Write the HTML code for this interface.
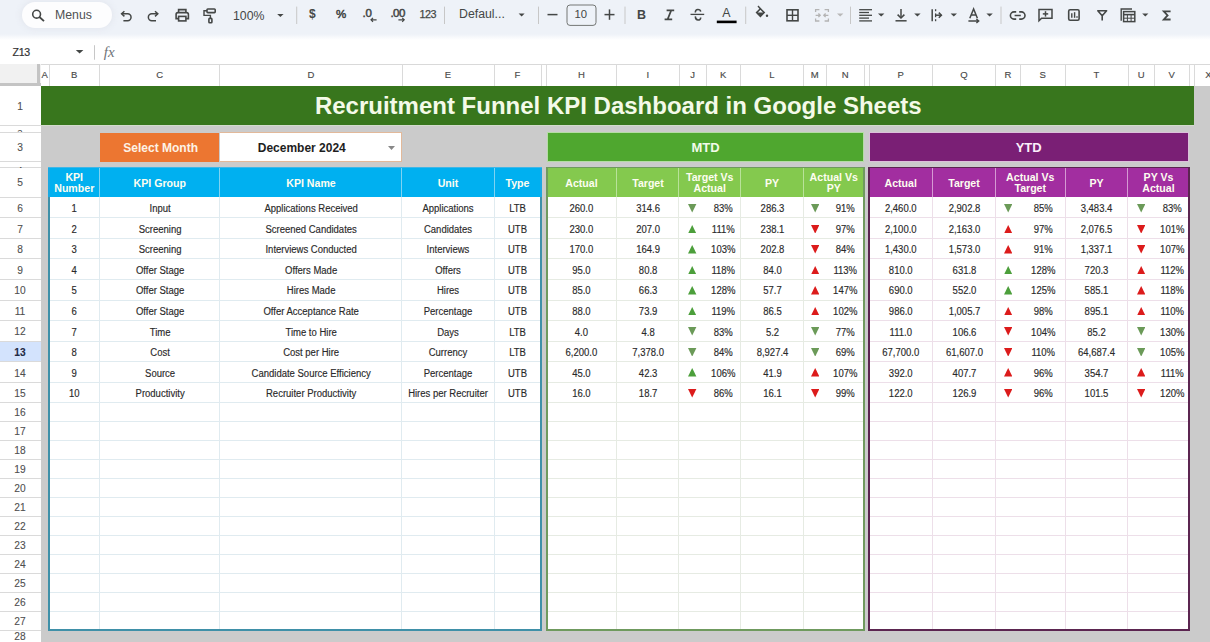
<!DOCTYPE html><html><head><meta charset="utf-8"><style>
html,body{margin:0;padding:0;width:1210px;height:642px;overflow:hidden;background:#fff;font-family:"Liberation Sans",sans-serif;}
div,svg{position:absolute;box-sizing:border-box;}
.t{height:20px;line-height:20px;white-space:nowrap;}
.d{-webkit-text-stroke:0.15px #2a2a2a;font-size:10px !important;transform:scaleX(0.95);}
</style></head><body>
<div style="left:0.00px;top:0.00px;width:1210.00px;height:38.50px;background:#eef2f8;"></div>
<div style="left:0.00px;top:38.50px;width:1210.00px;height:25.50px;background:#ffffff;"></div>
<div style="left:0.00px;top:34.00px;width:1210.00px;height:6.00px;background:linear-gradient(#eef2f8,#ffffff);"></div>
<div style="left:40.50px;top:64.00px;width:1169.50px;height:578.00px;background:#cbcbcb;"></div>
<div style="left:0.00px;top:64.00px;width:1210.00px;height:22.30px;background:#ffffff;"></div>
<div style="left:0.00px;top:63.60px;width:1210.00px;height:1.00px;background:#d9d9d9;"></div>
<div style="left:0.00px;top:86.30px;width:40.50px;height:555.70px;background:#ffffff;"></div>
<div class="t " style="left:40.50px;width:8.50px;top:65.01px;font-size:9.5px;font-weight:normal;color:#4a4a4a;text-align:center;-webkit-text-stroke:0.15px;">A</div>
<div style="left:48.50px;top:64.00px;width:1.00px;height:22.30px;background:#dadada;"></div>
<div class="t " style="left:49.00px;width:50.50px;top:65.01px;font-size:9.5px;font-weight:normal;color:#4a4a4a;text-align:center;-webkit-text-stroke:0.15px;">B</div>
<div style="left:99.00px;top:64.00px;width:1.00px;height:22.30px;background:#dadada;"></div>
<div class="t " style="left:99.50px;width:120.20px;top:65.01px;font-size:9.5px;font-weight:normal;color:#4a4a4a;text-align:center;-webkit-text-stroke:0.15px;">C</div>
<div style="left:219.20px;top:64.00px;width:1.00px;height:22.30px;background:#dadada;"></div>
<div class="t " style="left:219.70px;width:182.30px;top:65.01px;font-size:9.5px;font-weight:normal;color:#4a4a4a;text-align:center;-webkit-text-stroke:0.15px;">D</div>
<div style="left:401.50px;top:64.00px;width:1.00px;height:22.30px;background:#dadada;"></div>
<div class="t " style="left:402.00px;width:92.00px;top:65.01px;font-size:9.5px;font-weight:normal;color:#4a4a4a;text-align:center;-webkit-text-stroke:0.15px;">E</div>
<div style="left:493.50px;top:64.00px;width:1.00px;height:22.30px;background:#dadada;"></div>
<div class="t " style="left:494.00px;width:47.00px;top:65.01px;font-size:9.5px;font-weight:normal;color:#4a4a4a;text-align:center;-webkit-text-stroke:0.15px;">F</div>
<div style="left:540.50px;top:64.00px;width:1.00px;height:22.30px;background:#dadada;"></div>
<div style="left:545.50px;top:64.00px;width:1.00px;height:22.30px;background:#dadada;"></div>
<div class="t " style="left:546.00px;width:70.80px;top:65.01px;font-size:9.5px;font-weight:normal;color:#4a4a4a;text-align:center;-webkit-text-stroke:0.15px;">H</div>
<div style="left:616.30px;top:64.00px;width:1.00px;height:22.30px;background:#dadada;"></div>
<div class="t " style="left:616.80px;width:62.20px;top:65.01px;font-size:9.5px;font-weight:normal;color:#4a4a4a;text-align:center;-webkit-text-stroke:0.15px;">I</div>
<div style="left:678.50px;top:64.00px;width:1.00px;height:22.30px;background:#dadada;"></div>
<div class="t " style="left:679.00px;width:27.00px;top:65.01px;font-size:9.5px;font-weight:normal;color:#4a4a4a;text-align:center;-webkit-text-stroke:0.15px;">J</div>
<div style="left:705.50px;top:64.00px;width:1.00px;height:22.30px;background:#dadada;"></div>
<div class="t " style="left:706.00px;width:34.50px;top:65.01px;font-size:9.5px;font-weight:normal;color:#4a4a4a;text-align:center;-webkit-text-stroke:0.15px;">K</div>
<div style="left:740.00px;top:64.00px;width:1.00px;height:22.30px;background:#dadada;"></div>
<div class="t " style="left:740.50px;width:63.00px;top:65.01px;font-size:9.5px;font-weight:normal;color:#4a4a4a;text-align:center;-webkit-text-stroke:0.15px;">L</div>
<div style="left:803.00px;top:64.00px;width:1.00px;height:22.30px;background:#dadada;"></div>
<div class="t " style="left:803.50px;width:22.50px;top:65.01px;font-size:9.5px;font-weight:normal;color:#4a4a4a;text-align:center;-webkit-text-stroke:0.15px;">M</div>
<div style="left:825.50px;top:64.00px;width:1.00px;height:22.30px;background:#dadada;"></div>
<div class="t " style="left:826.00px;width:38.50px;top:65.01px;font-size:9.5px;font-weight:normal;color:#4a4a4a;text-align:center;-webkit-text-stroke:0.15px;">N</div>
<div style="left:864.00px;top:64.00px;width:1.00px;height:22.30px;background:#dadada;"></div>
<div style="left:868.50px;top:64.00px;width:1.00px;height:22.30px;background:#dadada;"></div>
<div class="t " style="left:869.00px;width:63.50px;top:65.01px;font-size:9.5px;font-weight:normal;color:#4a4a4a;text-align:center;-webkit-text-stroke:0.15px;">P</div>
<div style="left:932.00px;top:64.00px;width:1.00px;height:22.30px;background:#dadada;"></div>
<div class="t " style="left:932.50px;width:63.00px;top:65.01px;font-size:9.5px;font-weight:normal;color:#4a4a4a;text-align:center;-webkit-text-stroke:0.15px;">Q</div>
<div style="left:995.00px;top:64.00px;width:1.00px;height:22.30px;background:#dadada;"></div>
<div class="t " style="left:995.50px;width:25.00px;top:65.01px;font-size:9.5px;font-weight:normal;color:#4a4a4a;text-align:center;-webkit-text-stroke:0.15px;">R</div>
<div style="left:1020.00px;top:64.00px;width:1.00px;height:22.30px;background:#dadada;"></div>
<div class="t " style="left:1020.50px;width:44.50px;top:65.01px;font-size:9.5px;font-weight:normal;color:#4a4a4a;text-align:center;-webkit-text-stroke:0.15px;">S</div>
<div style="left:1064.50px;top:64.00px;width:1.00px;height:22.30px;background:#dadada;"></div>
<div class="t " style="left:1065.00px;width:63.00px;top:65.01px;font-size:9.5px;font-weight:normal;color:#4a4a4a;text-align:center;-webkit-text-stroke:0.15px;">T</div>
<div style="left:1127.50px;top:64.00px;width:1.00px;height:22.30px;background:#dadada;"></div>
<div class="t " style="left:1128.00px;width:26.50px;top:65.01px;font-size:9.5px;font-weight:normal;color:#4a4a4a;text-align:center;-webkit-text-stroke:0.15px;">U</div>
<div style="left:1154.00px;top:64.00px;width:1.00px;height:22.30px;background:#dadada;"></div>
<div class="t " style="left:1154.50px;width:34.50px;top:65.01px;font-size:9.5px;font-weight:normal;color:#4a4a4a;text-align:center;-webkit-text-stroke:0.15px;">V</div>
<div style="left:1188.50px;top:64.00px;width:1.00px;height:22.30px;background:#dadada;"></div>
<div style="left:1193.50px;top:64.00px;width:1.00px;height:22.30px;background:#dadada;"></div>
<div class="t " style="left:1194.00px;width:29.00px;top:65.01px;font-size:9.5px;font-weight:normal;color:#4a4a4a;text-align:center;-webkit-text-stroke:0.15px;">X</div>
<div style="left:1259.50px;top:64.00px;width:1.00px;height:22.30px;background:#dadada;"></div>
<div style="left:0.00px;top:64.00px;width:40.50px;height:22.30px;background:#f1f1f1;"></div>
<div style="left:37.30px;top:64.00px;width:3.20px;height:22.30px;background:#c4c4c4;"></div>
<div style="left:0.00px;top:82.60px;width:40.50px;height:3.70px;background:#c4c4c4;"></div>
<div style="left:0.00px;top:124.50px;width:40.50px;height:1.00px;background:#dadada;"></div>
<div class="t " style="left:0.00px;width:40.00px;top:96.77px;font-size:10.2px;font-weight:normal;color:#4f4f4f;text-align:center;-webkit-text-stroke:0.1px;">1</div>
<div style="left:0.00px;top:131.80px;width:40.50px;height:1.00px;background:#dadada;"></div>
<div style="left:0;top:125.00px;width:40px;height:7.30px;overflow:hidden;"><div class="t" style="position:absolute;left:0;width:40px;top:-2.35px;font-size:9.5px;color:#444;text-align:center;">2</div></div>
<div style="left:0.00px;top:161.40px;width:40.50px;height:1.00px;background:#dadada;"></div>
<div class="t " style="left:0.00px;width:40.00px;top:137.77px;font-size:10.2px;font-weight:normal;color:#4f4f4f;text-align:center;-webkit-text-stroke:0.1px;">3</div>
<div style="left:0.00px;top:167.20px;width:40.50px;height:1.00px;background:#dadada;"></div>
<div style="left:0;top:161.90px;width:40px;height:5.80px;overflow:hidden;"><div class="t" style="position:absolute;left:0;width:40px;top:-1.50px;font-size:9.5px;color:#444;text-align:center;">4</div></div>
<div style="left:0.00px;top:196.70px;width:40.50px;height:1.00px;background:#dadada;"></div>
<div class="t " style="left:0.00px;width:40.00px;top:173.12px;font-size:10.2px;font-weight:normal;color:#4f4f4f;text-align:center;-webkit-text-stroke:0.1px;">5</div>
<div style="left:0.00px;top:217.26px;width:40.50px;height:1.00px;background:#dadada;"></div>
<div class="t " style="left:0.00px;width:40.00px;top:199.13px;font-size:10.2px;font-weight:normal;color:#4f4f4f;text-align:center;-webkit-text-stroke:0.1px;">6</div>
<div style="left:0.00px;top:237.82px;width:40.50px;height:1.00px;background:#dadada;"></div>
<div class="t " style="left:0.00px;width:40.00px;top:219.69px;font-size:10.2px;font-weight:normal;color:#4f4f4f;text-align:center;-webkit-text-stroke:0.1px;">7</div>
<div style="left:0.00px;top:258.38px;width:40.50px;height:1.00px;background:#dadada;"></div>
<div class="t " style="left:0.00px;width:40.00px;top:240.25px;font-size:10.2px;font-weight:normal;color:#4f4f4f;text-align:center;-webkit-text-stroke:0.1px;">8</div>
<div style="left:0.00px;top:278.94px;width:40.50px;height:1.00px;background:#dadada;"></div>
<div class="t " style="left:0.00px;width:40.00px;top:260.81px;font-size:10.2px;font-weight:normal;color:#4f4f4f;text-align:center;-webkit-text-stroke:0.1px;">9</div>
<div style="left:0.00px;top:299.50px;width:40.50px;height:1.00px;background:#dadada;"></div>
<div class="t " style="left:0.00px;width:40.00px;top:281.37px;font-size:10.2px;font-weight:normal;color:#4f4f4f;text-align:center;-webkit-text-stroke:0.1px;">10</div>
<div style="left:0.00px;top:320.06px;width:40.50px;height:1.00px;background:#dadada;"></div>
<div class="t " style="left:0.00px;width:40.00px;top:301.93px;font-size:10.2px;font-weight:normal;color:#4f4f4f;text-align:center;-webkit-text-stroke:0.1px;">11</div>
<div style="left:0.00px;top:340.62px;width:40.50px;height:1.00px;background:#dadada;"></div>
<div class="t " style="left:0.00px;width:40.00px;top:322.49px;font-size:10.2px;font-weight:normal;color:#4f4f4f;text-align:center;-webkit-text-stroke:0.1px;">12</div>
<div style="left:0.00px;top:361.18px;width:40.50px;height:1.00px;background:#dadada;"></div>
<div style="left:0.00px;top:341.62px;width:40.50px;height:19.56px;background:#d3e3fd;"></div>
<div class="t " style="left:0.00px;width:40.00px;top:343.05px;font-size:10.2px;font-weight:bold;color:#1f2a44;text-align:center;-webkit-text-stroke:0.1px;">13</div>
<div style="left:0.00px;top:381.74px;width:40.50px;height:1.00px;background:#dadada;"></div>
<div class="t " style="left:0.00px;width:40.00px;top:363.61px;font-size:10.2px;font-weight:normal;color:#4f4f4f;text-align:center;-webkit-text-stroke:0.1px;">14</div>
<div style="left:0.00px;top:402.30px;width:40.50px;height:1.00px;background:#dadada;"></div>
<div class="t " style="left:0.00px;width:40.00px;top:384.17px;font-size:10.2px;font-weight:normal;color:#4f4f4f;text-align:center;-webkit-text-stroke:0.1px;">15</div>
<div style="left:0.00px;top:421.26px;width:40.50px;height:1.00px;background:#dadada;"></div>
<div class="t " style="left:0.00px;width:40.00px;top:403.13px;font-size:10.2px;font-weight:normal;color:#4f4f4f;text-align:center;-webkit-text-stroke:0.1px;">16</div>
<div style="left:0.00px;top:440.22px;width:40.50px;height:1.00px;background:#dadada;"></div>
<div class="t " style="left:0.00px;width:40.00px;top:422.09px;font-size:10.2px;font-weight:normal;color:#4f4f4f;text-align:center;-webkit-text-stroke:0.1px;">17</div>
<div style="left:0.00px;top:459.18px;width:40.50px;height:1.00px;background:#dadada;"></div>
<div class="t " style="left:0.00px;width:40.00px;top:441.05px;font-size:10.2px;font-weight:normal;color:#4f4f4f;text-align:center;-webkit-text-stroke:0.1px;">18</div>
<div style="left:0.00px;top:478.14px;width:40.50px;height:1.00px;background:#dadada;"></div>
<div class="t " style="left:0.00px;width:40.00px;top:460.01px;font-size:10.2px;font-weight:normal;color:#4f4f4f;text-align:center;-webkit-text-stroke:0.1px;">19</div>
<div style="left:0.00px;top:497.10px;width:40.50px;height:1.00px;background:#dadada;"></div>
<div class="t " style="left:0.00px;width:40.00px;top:478.97px;font-size:10.2px;font-weight:normal;color:#4f4f4f;text-align:center;-webkit-text-stroke:0.1px;">20</div>
<div style="left:0.00px;top:516.06px;width:40.50px;height:1.00px;background:#dadada;"></div>
<div class="t " style="left:0.00px;width:40.00px;top:497.93px;font-size:10.2px;font-weight:normal;color:#4f4f4f;text-align:center;-webkit-text-stroke:0.1px;">21</div>
<div style="left:0.00px;top:535.02px;width:40.50px;height:1.00px;background:#dadada;"></div>
<div class="t " style="left:0.00px;width:40.00px;top:516.89px;font-size:10.2px;font-weight:normal;color:#4f4f4f;text-align:center;-webkit-text-stroke:0.1px;">22</div>
<div style="left:0.00px;top:553.98px;width:40.50px;height:1.00px;background:#dadada;"></div>
<div class="t " style="left:0.00px;width:40.00px;top:535.85px;font-size:10.2px;font-weight:normal;color:#4f4f4f;text-align:center;-webkit-text-stroke:0.1px;">23</div>
<div style="left:0.00px;top:572.94px;width:40.50px;height:1.00px;background:#dadada;"></div>
<div class="t " style="left:0.00px;width:40.00px;top:554.81px;font-size:10.2px;font-weight:normal;color:#4f4f4f;text-align:center;-webkit-text-stroke:0.1px;">24</div>
<div style="left:0.00px;top:591.90px;width:40.50px;height:1.00px;background:#dadada;"></div>
<div class="t " style="left:0.00px;width:40.00px;top:573.77px;font-size:10.2px;font-weight:normal;color:#4f4f4f;text-align:center;-webkit-text-stroke:0.1px;">25</div>
<div style="left:0.00px;top:610.86px;width:40.50px;height:1.00px;background:#dadada;"></div>
<div class="t " style="left:0.00px;width:40.00px;top:592.73px;font-size:10.2px;font-weight:normal;color:#4f4f4f;text-align:center;-webkit-text-stroke:0.1px;">26</div>
<div style="left:0.00px;top:629.82px;width:40.50px;height:1.00px;background:#dadada;"></div>
<div class="t " style="left:0.00px;width:40.00px;top:611.69px;font-size:10.2px;font-weight:normal;color:#4f4f4f;text-align:center;-webkit-text-stroke:0.1px;">27</div>
<div style="left:0.00px;top:648.80px;width:40.50px;height:1.00px;background:#dadada;"></div>
<div class="t " style="left:0.00px;width:40.00px;top:627.47px;font-size:10.2px;font-weight:normal;color:#4f4f4f;text-align:center;-webkit-text-stroke:0.1px;">28</div>
<div style="left:40.50px;top:86.30px;width:1153.50px;height:38.70px;background:#38761d;"></div>
<div style="left:40.50px;top:125.00px;width:1153.50px;height:1.00px;background:#d3dccd;"></div>
<div class="t " style="left:41.50px;width:1153.50px;top:96.48px;font-size:24px;font-weight:bold;color:#f4fae8;text-align:center;">Recruitment Funnel KPI Dashboard in Google Sheets</div>
<div style="left:100.30px;top:132.50px;width:119.20px;height:29.30px;background:#ec7631;"></div>
<div class="t " style="left:101.80px;width:117.70px;top:137.84px;font-size:12px;font-weight:bold;color:#fdf2e6;text-align:center;">Select Month</div>
<div style="left:219.50px;top:132.30px;width:182.50px;height:29.70px;background:#ffffff;border:1px solid #e2b99a;border-left:none;"></div>
<div class="t " style="left:219.50px;width:164.50px;top:138.04px;font-size:12px;font-weight:bold;color:#1e1e1e;text-align:center;">December 2024</div>
<svg style="left:388px;top:145.5px" width="7" height="4" viewBox="0 0 7 4"><polygon points="0,0 7,0 3.5,4" fill="#888"/></svg>
<div style="left:546.60px;top:132.30px;width:317.80px;height:29.30px;background:#4fa72f;border:1px solid #b5dca5;"></div>
<div class="t " style="left:547.30px;width:316.50px;top:137.50px;font-size:13px;font-weight:bold;color:#f2fbe8;text-align:center;">MTD</div>
<div style="left:868.60px;top:132.30px;width:320.20px;height:29.30px;background:#7a1f75;border:1px solid #dcc0da;"></div>
<div class="t " style="left:869.20px;width:319.00px;top:137.50px;font-size:13px;font-weight:bold;color:#fbeefa;text-align:center;">YTD</div>
<div style="left:49.00px;top:197.20px;width:492.00px;height:433.10px;background:#ffffff;"></div>
<div style="left:49.00px;top:167.30px;width:492.00px;height:29.90px;background:#00b0f0;"></div>
<div style="left:49.00px;top:217.26px;width:492.00px;height:1.00px;background:#e0ebf0;"></div>
<div style="left:49.00px;top:237.82px;width:492.00px;height:1.00px;background:#e0ebf0;"></div>
<div style="left:49.00px;top:258.38px;width:492.00px;height:1.00px;background:#e0ebf0;"></div>
<div style="left:49.00px;top:278.94px;width:492.00px;height:1.00px;background:#e0ebf0;"></div>
<div style="left:49.00px;top:299.50px;width:492.00px;height:1.00px;background:#e0ebf0;"></div>
<div style="left:49.00px;top:320.06px;width:492.00px;height:1.00px;background:#e0ebf0;"></div>
<div style="left:49.00px;top:340.62px;width:492.00px;height:1.00px;background:#e0ebf0;"></div>
<div style="left:49.00px;top:361.18px;width:492.00px;height:1.00px;background:#e0ebf0;"></div>
<div style="left:49.00px;top:381.74px;width:492.00px;height:1.00px;background:#e0ebf0;"></div>
<div style="left:49.00px;top:402.30px;width:492.00px;height:1.00px;background:#e0ebf0;"></div>
<div style="left:49.00px;top:421.26px;width:492.00px;height:1.00px;background:#e0ebf0;"></div>
<div style="left:49.00px;top:440.22px;width:492.00px;height:1.00px;background:#e0ebf0;"></div>
<div style="left:49.00px;top:459.18px;width:492.00px;height:1.00px;background:#e0ebf0;"></div>
<div style="left:49.00px;top:478.14px;width:492.00px;height:1.00px;background:#e0ebf0;"></div>
<div style="left:49.00px;top:497.10px;width:492.00px;height:1.00px;background:#e0ebf0;"></div>
<div style="left:49.00px;top:516.06px;width:492.00px;height:1.00px;background:#e0ebf0;"></div>
<div style="left:49.00px;top:535.02px;width:492.00px;height:1.00px;background:#e0ebf0;"></div>
<div style="left:49.00px;top:553.98px;width:492.00px;height:1.00px;background:#e0ebf0;"></div>
<div style="left:49.00px;top:572.94px;width:492.00px;height:1.00px;background:#e0ebf0;"></div>
<div style="left:49.00px;top:591.90px;width:492.00px;height:1.00px;background:#e0ebf0;"></div>
<div style="left:49.00px;top:610.86px;width:492.00px;height:1.00px;background:#e0ebf0;"></div>
<div style="left:49.00px;top:629.82px;width:492.00px;height:1.00px;background:#e0ebf0;"></div>
<div style="left:99.00px;top:197.20px;width:1.00px;height:433.10px;background:#e0ebf0;"></div>
<div style="left:99.00px;top:167.30px;width:1.00px;height:29.90px;background:#7fd3f2;"></div>
<div style="left:219.20px;top:197.20px;width:1.00px;height:433.10px;background:#e0ebf0;"></div>
<div style="left:219.20px;top:167.30px;width:1.00px;height:29.90px;background:#7fd3f2;"></div>
<div style="left:401.20px;top:197.20px;width:1.00px;height:433.10px;background:#e0ebf0;"></div>
<div style="left:401.20px;top:167.30px;width:1.00px;height:29.90px;background:#7fd3f2;"></div>
<div style="left:493.70px;top:197.20px;width:1.00px;height:433.10px;background:#e0ebf0;"></div>
<div style="left:493.70px;top:167.30px;width:1.00px;height:29.90px;background:#7fd3f2;"></div>
<div class="t " style="left:49.00px;width:50.50px;top:167.03px;font-size:10.6px;font-weight:bold;color:#fdfdf0;text-align:center;">KPI</div>
<div class="t " style="left:49.00px;width:50.50px;top:178.13px;font-size:10.6px;font-weight:bold;color:#fdfdf0;text-align:center;">Number</div>
<div class="t " style="left:99.50px;width:120.50px;top:173.13px;font-size:10.6px;font-weight:bold;color:#fdfdf0;text-align:center;">KPI Group</div>
<div class="t " style="left:220.00px;width:182.00px;top:173.13px;font-size:10.6px;font-weight:bold;color:#fdfdf0;text-align:center;">KPI Name</div>
<div class="t " style="left:402.00px;width:92.00px;top:173.13px;font-size:10.6px;font-weight:bold;color:#fdfdf0;text-align:center;">Unit</div>
<div class="t " style="left:494.00px;width:47.00px;top:173.13px;font-size:10.6px;font-weight:bold;color:#fdfdf0;text-align:center;">Type</div>
<div style="left:48.00px;top:167.30px;width:2.00px;height:463.50px;background:#3f90a8;"></div>
<div style="left:540.00px;top:167.30px;width:2.00px;height:463.50px;background:#3f90a8;"></div>
<div style="left:48.00px;top:167.30px;width:2.00px;height:29.90px;background:#1aa9e2;"></div>
<div style="left:540.00px;top:167.30px;width:2.00px;height:29.90px;background:#1aa9e2;"></div>
<div style="left:48.00px;top:628.80px;width:494.00px;height:2.00px;background:#3f90a8;"></div>
<div style="left:48.00px;top:167.00px;width:494.00px;height:1.00px;background:#3fb6e6;"></div>
<div style="left:546.60px;top:197.20px;width:317.40px;height:433.10px;background:#ffffff;"></div>
<div style="left:546.60px;top:167.30px;width:317.40px;height:29.90px;background:#84c94e;"></div>
<div style="left:546.60px;top:217.26px;width:317.40px;height:1.00px;background:#e6ebe3;"></div>
<div style="left:546.60px;top:237.82px;width:317.40px;height:1.00px;background:#e6ebe3;"></div>
<div style="left:546.60px;top:258.38px;width:317.40px;height:1.00px;background:#e6ebe3;"></div>
<div style="left:546.60px;top:278.94px;width:317.40px;height:1.00px;background:#e6ebe3;"></div>
<div style="left:546.60px;top:299.50px;width:317.40px;height:1.00px;background:#e6ebe3;"></div>
<div style="left:546.60px;top:320.06px;width:317.40px;height:1.00px;background:#e6ebe3;"></div>
<div style="left:546.60px;top:340.62px;width:317.40px;height:1.00px;background:#e6ebe3;"></div>
<div style="left:546.60px;top:361.18px;width:317.40px;height:1.00px;background:#e6ebe3;"></div>
<div style="left:546.60px;top:381.74px;width:317.40px;height:1.00px;background:#e6ebe3;"></div>
<div style="left:546.60px;top:402.30px;width:317.40px;height:1.00px;background:#e6ebe3;"></div>
<div style="left:546.60px;top:421.26px;width:317.40px;height:1.00px;background:#e6ebe3;"></div>
<div style="left:546.60px;top:440.22px;width:317.40px;height:1.00px;background:#e6ebe3;"></div>
<div style="left:546.60px;top:459.18px;width:317.40px;height:1.00px;background:#e6ebe3;"></div>
<div style="left:546.60px;top:478.14px;width:317.40px;height:1.00px;background:#e6ebe3;"></div>
<div style="left:546.60px;top:497.10px;width:317.40px;height:1.00px;background:#e6ebe3;"></div>
<div style="left:546.60px;top:516.06px;width:317.40px;height:1.00px;background:#e6ebe3;"></div>
<div style="left:546.60px;top:535.02px;width:317.40px;height:1.00px;background:#e6ebe3;"></div>
<div style="left:546.60px;top:553.98px;width:317.40px;height:1.00px;background:#e6ebe3;"></div>
<div style="left:546.60px;top:572.94px;width:317.40px;height:1.00px;background:#e6ebe3;"></div>
<div style="left:546.60px;top:591.90px;width:317.40px;height:1.00px;background:#e6ebe3;"></div>
<div style="left:546.60px;top:610.86px;width:317.40px;height:1.00px;background:#e6ebe3;"></div>
<div style="left:546.60px;top:629.82px;width:317.40px;height:1.00px;background:#e6ebe3;"></div>
<div style="left:616.30px;top:197.20px;width:1.00px;height:433.10px;background:#e6ebe3;"></div>
<div style="left:616.30px;top:167.30px;width:1.00px;height:29.90px;background:#b9e29a;"></div>
<div style="left:678.30px;top:197.20px;width:1.00px;height:433.10px;background:#e6ebe3;"></div>
<div style="left:678.30px;top:167.30px;width:1.00px;height:29.90px;background:#b9e29a;"></div>
<div style="left:740.10px;top:197.20px;width:1.00px;height:433.10px;background:#e6ebe3;"></div>
<div style="left:740.10px;top:167.30px;width:1.00px;height:29.90px;background:#b9e29a;"></div>
<div style="left:802.80px;top:197.20px;width:1.00px;height:433.10px;background:#e6ebe3;"></div>
<div style="left:802.80px;top:167.30px;width:1.00px;height:29.90px;background:#b9e29a;"></div>
<div class="t " style="left:546.00px;width:71.00px;top:173.13px;font-size:10.6px;font-weight:bold;color:#fdfdf0;text-align:center;">Actual</div>
<div class="t " style="left:617.00px;width:62.00px;top:173.13px;font-size:10.6px;font-weight:bold;color:#fdfdf0;text-align:center;">Target</div>
<div class="t " style="left:679.00px;width:61.50px;top:167.03px;font-size:10.6px;font-weight:bold;color:#fdfdf0;text-align:center;">Target Vs</div>
<div class="t " style="left:679.00px;width:61.50px;top:178.13px;font-size:10.6px;font-weight:bold;color:#fdfdf0;text-align:center;">Actual</div>
<div class="t " style="left:740.50px;width:63.00px;top:173.13px;font-size:10.6px;font-weight:bold;color:#fdfdf0;text-align:center;">PY</div>
<div class="t " style="left:803.50px;width:60.50px;top:167.03px;font-size:10.6px;font-weight:bold;color:#fdfdf0;text-align:center;">Actual Vs</div>
<div class="t " style="left:803.50px;width:60.50px;top:178.13px;font-size:10.6px;font-weight:bold;color:#fdfdf0;text-align:center;">PY</div>
<div style="left:545.60px;top:167.30px;width:2.00px;height:463.50px;background:#6f9a5e;"></div>
<div style="left:863.00px;top:167.30px;width:2.00px;height:463.50px;background:#6f9a5e;"></div>
<div style="left:545.60px;top:628.80px;width:319.40px;height:2.00px;background:#6f9a5e;"></div>
<div style="left:545.60px;top:167.00px;width:319.40px;height:1.00px;background:#6f9a5e;"></div>
<div style="left:869.00px;top:197.20px;width:320.00px;height:433.10px;background:#ffffff;"></div>
<div style="left:869.00px;top:167.30px;width:320.00px;height:29.90px;background:#a22ea0;"></div>
<div style="left:869.00px;top:217.26px;width:320.00px;height:1.00px;background:#eddfe9;"></div>
<div style="left:869.00px;top:237.82px;width:320.00px;height:1.00px;background:#eddfe9;"></div>
<div style="left:869.00px;top:258.38px;width:320.00px;height:1.00px;background:#eddfe9;"></div>
<div style="left:869.00px;top:278.94px;width:320.00px;height:1.00px;background:#eddfe9;"></div>
<div style="left:869.00px;top:299.50px;width:320.00px;height:1.00px;background:#eddfe9;"></div>
<div style="left:869.00px;top:320.06px;width:320.00px;height:1.00px;background:#eddfe9;"></div>
<div style="left:869.00px;top:340.62px;width:320.00px;height:1.00px;background:#eddfe9;"></div>
<div style="left:869.00px;top:361.18px;width:320.00px;height:1.00px;background:#eddfe9;"></div>
<div style="left:869.00px;top:381.74px;width:320.00px;height:1.00px;background:#eddfe9;"></div>
<div style="left:869.00px;top:402.30px;width:320.00px;height:1.00px;background:#eddfe9;"></div>
<div style="left:869.00px;top:421.26px;width:320.00px;height:1.00px;background:#eddfe9;"></div>
<div style="left:869.00px;top:440.22px;width:320.00px;height:1.00px;background:#eddfe9;"></div>
<div style="left:869.00px;top:459.18px;width:320.00px;height:1.00px;background:#eddfe9;"></div>
<div style="left:869.00px;top:478.14px;width:320.00px;height:1.00px;background:#eddfe9;"></div>
<div style="left:869.00px;top:497.10px;width:320.00px;height:1.00px;background:#eddfe9;"></div>
<div style="left:869.00px;top:516.06px;width:320.00px;height:1.00px;background:#eddfe9;"></div>
<div style="left:869.00px;top:535.02px;width:320.00px;height:1.00px;background:#eddfe9;"></div>
<div style="left:869.00px;top:553.98px;width:320.00px;height:1.00px;background:#eddfe9;"></div>
<div style="left:869.00px;top:572.94px;width:320.00px;height:1.00px;background:#eddfe9;"></div>
<div style="left:869.00px;top:591.90px;width:320.00px;height:1.00px;background:#eddfe9;"></div>
<div style="left:869.00px;top:610.86px;width:320.00px;height:1.00px;background:#eddfe9;"></div>
<div style="left:869.00px;top:629.82px;width:320.00px;height:1.00px;background:#eddfe9;"></div>
<div style="left:932.10px;top:197.20px;width:1.00px;height:433.10px;background:#eddfe9;"></div>
<div style="left:932.10px;top:167.30px;width:1.00px;height:29.90px;background:#d59ad3;"></div>
<div style="left:994.60px;top:197.20px;width:1.00px;height:433.10px;background:#eddfe9;"></div>
<div style="left:994.60px;top:167.30px;width:1.00px;height:29.90px;background:#d59ad3;"></div>
<div style="left:1064.50px;top:197.20px;width:1.00px;height:433.10px;background:#eddfe9;"></div>
<div style="left:1064.50px;top:167.30px;width:1.00px;height:29.90px;background:#d59ad3;"></div>
<div style="left:1127.30px;top:197.20px;width:1.00px;height:433.10px;background:#eddfe9;"></div>
<div style="left:1127.30px;top:167.30px;width:1.00px;height:29.90px;background:#d59ad3;"></div>
<div class="t " style="left:869.00px;width:63.50px;top:173.13px;font-size:10.6px;font-weight:bold;color:#fdfdf0;text-align:center;">Actual</div>
<div class="t " style="left:932.50px;width:63.00px;top:173.13px;font-size:10.6px;font-weight:bold;color:#fdfdf0;text-align:center;">Target</div>
<div class="t " style="left:995.50px;width:69.50px;top:167.03px;font-size:10.6px;font-weight:bold;color:#fdfdf0;text-align:center;">Actual Vs</div>
<div class="t " style="left:995.50px;width:69.50px;top:178.13px;font-size:10.6px;font-weight:bold;color:#fdfdf0;text-align:center;">Target</div>
<div class="t " style="left:1065.00px;width:63.00px;top:173.13px;font-size:10.6px;font-weight:bold;color:#fdfdf0;text-align:center;">PY</div>
<div class="t " style="left:1128.00px;width:61.00px;top:167.03px;font-size:10.6px;font-weight:bold;color:#fdfdf0;text-align:center;">PY Vs</div>
<div class="t " style="left:1128.00px;width:61.00px;top:178.13px;font-size:10.6px;font-weight:bold;color:#fdfdf0;text-align:center;">Actual</div>
<div style="left:868.00px;top:167.30px;width:2.00px;height:463.50px;background:#5b2550;"></div>
<div style="left:1188.00px;top:167.30px;width:2.00px;height:463.50px;background:#5b2550;"></div>
<div style="left:868.00px;top:628.80px;width:322.00px;height:2.00px;background:#5b2550;"></div>
<div style="left:868.00px;top:167.00px;width:322.00px;height:1.00px;background:#5b2550;"></div>
<div class="t d" style="left:49.00px;width:50.50px;top:199.17px;font-size:9.5px;font-weight:normal;color:#2a2a2a;text-align:center;">1</div>
<div class="t d" style="left:99.50px;width:120.20px;top:199.17px;font-size:9.5px;font-weight:normal;color:#2a2a2a;text-align:center;">Input</div>
<div class="t d" style="left:219.70px;width:182.30px;top:199.17px;font-size:9.5px;font-weight:normal;color:#2a2a2a;text-align:center;">Applications Received</div>
<div class="t d" style="left:402.00px;width:92.00px;top:199.17px;font-size:9.5px;font-weight:normal;color:#2a2a2a;text-align:center;">Applications</div>
<div class="t d" style="left:494.00px;width:47.00px;top:199.17px;font-size:9.5px;font-weight:normal;color:#2a2a2a;text-align:center;">LTB</div>
<div class="t d" style="left:546.00px;width:70.80px;top:199.17px;font-size:9.5px;font-weight:normal;color:#2a2a2a;text-align:center;">260.0</div>
<div class="t d" style="left:616.80px;width:62.20px;top:199.17px;font-size:9.5px;font-weight:normal;color:#2a2a2a;text-align:center;">314.6</div>
<svg style="left:688.30px;top:203.96px" width="8.4" height="8.6" viewBox="0 0 8.4 8.6"><polygon points="0,0 8.4,0 4.2,8.6" fill="#6b9a58"/></svg>
<div class="t d" style="left:706.00px;width:34.50px;top:199.17px;font-size:9.5px;font-weight:normal;color:#2a2a2a;text-align:center;">83%</div>
<div class="t d" style="left:740.50px;width:63.00px;top:199.17px;font-size:9.5px;font-weight:normal;color:#2a2a2a;text-align:center;">286.3</div>
<svg style="left:810.55px;top:203.96px" width="8.4" height="8.6" viewBox="0 0 8.4 8.6"><polygon points="0,0 8.4,0 4.2,8.6" fill="#6b9a58"/></svg>
<div class="t d" style="left:826.00px;width:38.50px;top:199.17px;font-size:9.5px;font-weight:normal;color:#2a2a2a;text-align:center;">91%</div>
<div class="t d" style="left:869.00px;width:63.50px;top:199.17px;font-size:9.5px;font-weight:normal;color:#2a2a2a;text-align:center;">2,460.0</div>
<div class="t d" style="left:932.50px;width:63.00px;top:199.17px;font-size:9.5px;font-weight:normal;color:#2a2a2a;text-align:center;">2,902.8</div>
<svg style="left:1003.80px;top:203.96px" width="8.4" height="8.6" viewBox="0 0 8.4 8.6"><polygon points="0,0 8.4,0 4.2,8.6" fill="#6b9a58"/></svg>
<div class="t d" style="left:1020.50px;width:44.50px;top:199.17px;font-size:9.5px;font-weight:normal;color:#2a2a2a;text-align:center;">85%</div>
<div class="t d" style="left:1065.00px;width:63.00px;top:199.17px;font-size:9.5px;font-weight:normal;color:#2a2a2a;text-align:center;">3,483.4</div>
<svg style="left:1137.05px;top:203.96px" width="8.4" height="8.6" viewBox="0 0 8.4 8.6"><polygon points="0,0 8.4,0 4.2,8.6" fill="#6b9a58"/></svg>
<div class="t d" style="left:1154.50px;width:34.50px;top:199.17px;font-size:9.5px;font-weight:normal;color:#2a2a2a;text-align:center;">83%</div>
<div class="t d" style="left:49.00px;width:50.50px;top:219.73px;font-size:9.5px;font-weight:normal;color:#2a2a2a;text-align:center;">2</div>
<div class="t d" style="left:99.50px;width:120.20px;top:219.73px;font-size:9.5px;font-weight:normal;color:#2a2a2a;text-align:center;">Screening</div>
<div class="t d" style="left:219.70px;width:182.30px;top:219.73px;font-size:9.5px;font-weight:normal;color:#2a2a2a;text-align:center;">Screened Candidates</div>
<div class="t d" style="left:402.00px;width:92.00px;top:219.73px;font-size:9.5px;font-weight:normal;color:#2a2a2a;text-align:center;">Candidates</div>
<div class="t d" style="left:494.00px;width:47.00px;top:219.73px;font-size:9.5px;font-weight:normal;color:#2a2a2a;text-align:center;">UTB</div>
<div class="t d" style="left:546.00px;width:70.80px;top:219.73px;font-size:9.5px;font-weight:normal;color:#2a2a2a;text-align:center;">230.0</div>
<div class="t d" style="left:616.80px;width:62.20px;top:219.73px;font-size:9.5px;font-weight:normal;color:#2a2a2a;text-align:center;">207.0</div>
<svg style="left:688.30px;top:224.52px" width="8.4" height="8.6" viewBox="0 0 8.4 8.6"><polygon points="0,8.6 8.4,8.6 4.2,0" fill="#4c9f3b"/></svg>
<div class="t d" style="left:706.00px;width:34.50px;top:219.73px;font-size:9.5px;font-weight:normal;color:#2a2a2a;text-align:center;">111%</div>
<div class="t d" style="left:740.50px;width:63.00px;top:219.73px;font-size:9.5px;font-weight:normal;color:#2a2a2a;text-align:center;">238.1</div>
<svg style="left:810.55px;top:224.52px" width="8.4" height="8.6" viewBox="0 0 8.4 8.6"><polygon points="0,0 8.4,0 4.2,8.6" fill="#dc1b1b"/></svg>
<div class="t d" style="left:826.00px;width:38.50px;top:219.73px;font-size:9.5px;font-weight:normal;color:#2a2a2a;text-align:center;">97%</div>
<div class="t d" style="left:869.00px;width:63.50px;top:219.73px;font-size:9.5px;font-weight:normal;color:#2a2a2a;text-align:center;">2,100.0</div>
<div class="t d" style="left:932.50px;width:63.00px;top:219.73px;font-size:9.5px;font-weight:normal;color:#2a2a2a;text-align:center;">2,163.0</div>
<svg style="left:1003.80px;top:224.52px" width="8.4" height="8.6" viewBox="0 0 8.4 8.6"><polygon points="0,8.6 8.4,8.6 4.2,0" fill="#dc1b1b"/></svg>
<div class="t d" style="left:1020.50px;width:44.50px;top:219.73px;font-size:9.5px;font-weight:normal;color:#2a2a2a;text-align:center;">97%</div>
<div class="t d" style="left:1065.00px;width:63.00px;top:219.73px;font-size:9.5px;font-weight:normal;color:#2a2a2a;text-align:center;">2,076.5</div>
<svg style="left:1137.05px;top:224.52px" width="8.4" height="8.6" viewBox="0 0 8.4 8.6"><polygon points="0,0 8.4,0 4.2,8.6" fill="#dc1b1b"/></svg>
<div class="t d" style="left:1154.50px;width:34.50px;top:219.73px;font-size:9.5px;font-weight:normal;color:#2a2a2a;text-align:center;">101%</div>
<div class="t d" style="left:49.00px;width:50.50px;top:240.29px;font-size:9.5px;font-weight:normal;color:#2a2a2a;text-align:center;">3</div>
<div class="t d" style="left:99.50px;width:120.20px;top:240.29px;font-size:9.5px;font-weight:normal;color:#2a2a2a;text-align:center;">Screening</div>
<div class="t d" style="left:219.70px;width:182.30px;top:240.29px;font-size:9.5px;font-weight:normal;color:#2a2a2a;text-align:center;">Interviews Conducted</div>
<div class="t d" style="left:402.00px;width:92.00px;top:240.29px;font-size:9.5px;font-weight:normal;color:#2a2a2a;text-align:center;">Interviews</div>
<div class="t d" style="left:494.00px;width:47.00px;top:240.29px;font-size:9.5px;font-weight:normal;color:#2a2a2a;text-align:center;">UTB</div>
<div class="t d" style="left:546.00px;width:70.80px;top:240.29px;font-size:9.5px;font-weight:normal;color:#2a2a2a;text-align:center;">170.0</div>
<div class="t d" style="left:616.80px;width:62.20px;top:240.29px;font-size:9.5px;font-weight:normal;color:#2a2a2a;text-align:center;">164.9</div>
<svg style="left:688.30px;top:245.08px" width="8.4" height="8.6" viewBox="0 0 8.4 8.6"><polygon points="0,8.6 8.4,8.6 4.2,0" fill="#4c9f3b"/></svg>
<div class="t d" style="left:706.00px;width:34.50px;top:240.29px;font-size:9.5px;font-weight:normal;color:#2a2a2a;text-align:center;">103%</div>
<div class="t d" style="left:740.50px;width:63.00px;top:240.29px;font-size:9.5px;font-weight:normal;color:#2a2a2a;text-align:center;">202.8</div>
<svg style="left:810.55px;top:245.08px" width="8.4" height="8.6" viewBox="0 0 8.4 8.6"><polygon points="0,0 8.4,0 4.2,8.6" fill="#dc1b1b"/></svg>
<div class="t d" style="left:826.00px;width:38.50px;top:240.29px;font-size:9.5px;font-weight:normal;color:#2a2a2a;text-align:center;">84%</div>
<div class="t d" style="left:869.00px;width:63.50px;top:240.29px;font-size:9.5px;font-weight:normal;color:#2a2a2a;text-align:center;">1,430.0</div>
<div class="t d" style="left:932.50px;width:63.00px;top:240.29px;font-size:9.5px;font-weight:normal;color:#2a2a2a;text-align:center;">1,573.0</div>
<svg style="left:1003.80px;top:245.08px" width="8.4" height="8.6" viewBox="0 0 8.4 8.6"><polygon points="0,8.6 8.4,8.6 4.2,0" fill="#dc1b1b"/></svg>
<div class="t d" style="left:1020.50px;width:44.50px;top:240.29px;font-size:9.5px;font-weight:normal;color:#2a2a2a;text-align:center;">91%</div>
<div class="t d" style="left:1065.00px;width:63.00px;top:240.29px;font-size:9.5px;font-weight:normal;color:#2a2a2a;text-align:center;">1,337.1</div>
<svg style="left:1137.05px;top:245.08px" width="8.4" height="8.6" viewBox="0 0 8.4 8.6"><polygon points="0,0 8.4,0 4.2,8.6" fill="#dc1b1b"/></svg>
<div class="t d" style="left:1154.50px;width:34.50px;top:240.29px;font-size:9.5px;font-weight:normal;color:#2a2a2a;text-align:center;">107%</div>
<div class="t d" style="left:49.00px;width:50.50px;top:260.85px;font-size:9.5px;font-weight:normal;color:#2a2a2a;text-align:center;">4</div>
<div class="t d" style="left:99.50px;width:120.20px;top:260.85px;font-size:9.5px;font-weight:normal;color:#2a2a2a;text-align:center;">Offer Stage</div>
<div class="t d" style="left:219.70px;width:182.30px;top:260.85px;font-size:9.5px;font-weight:normal;color:#2a2a2a;text-align:center;">Offers Made</div>
<div class="t d" style="left:402.00px;width:92.00px;top:260.85px;font-size:9.5px;font-weight:normal;color:#2a2a2a;text-align:center;">Offers</div>
<div class="t d" style="left:494.00px;width:47.00px;top:260.85px;font-size:9.5px;font-weight:normal;color:#2a2a2a;text-align:center;">UTB</div>
<div class="t d" style="left:546.00px;width:70.80px;top:260.85px;font-size:9.5px;font-weight:normal;color:#2a2a2a;text-align:center;">95.0</div>
<div class="t d" style="left:616.80px;width:62.20px;top:260.85px;font-size:9.5px;font-weight:normal;color:#2a2a2a;text-align:center;">80.8</div>
<svg style="left:688.30px;top:265.64px" width="8.4" height="8.6" viewBox="0 0 8.4 8.6"><polygon points="0,8.6 8.4,8.6 4.2,0" fill="#4c9f3b"/></svg>
<div class="t d" style="left:706.00px;width:34.50px;top:260.85px;font-size:9.5px;font-weight:normal;color:#2a2a2a;text-align:center;">118%</div>
<div class="t d" style="left:740.50px;width:63.00px;top:260.85px;font-size:9.5px;font-weight:normal;color:#2a2a2a;text-align:center;">84.0</div>
<svg style="left:810.55px;top:265.64px" width="8.4" height="8.6" viewBox="0 0 8.4 8.6"><polygon points="0,8.6 8.4,8.6 4.2,0" fill="#dc1b1b"/></svg>
<div class="t d" style="left:826.00px;width:38.50px;top:260.85px;font-size:9.5px;font-weight:normal;color:#2a2a2a;text-align:center;">113%</div>
<div class="t d" style="left:869.00px;width:63.50px;top:260.85px;font-size:9.5px;font-weight:normal;color:#2a2a2a;text-align:center;">810.0</div>
<div class="t d" style="left:932.50px;width:63.00px;top:260.85px;font-size:9.5px;font-weight:normal;color:#2a2a2a;text-align:center;">631.8</div>
<svg style="left:1003.80px;top:265.64px" width="8.4" height="8.6" viewBox="0 0 8.4 8.6"><polygon points="0,8.6 8.4,8.6 4.2,0" fill="#4c9f3b"/></svg>
<div class="t d" style="left:1020.50px;width:44.50px;top:260.85px;font-size:9.5px;font-weight:normal;color:#2a2a2a;text-align:center;">128%</div>
<div class="t d" style="left:1065.00px;width:63.00px;top:260.85px;font-size:9.5px;font-weight:normal;color:#2a2a2a;text-align:center;">720.3</div>
<svg style="left:1137.05px;top:265.64px" width="8.4" height="8.6" viewBox="0 0 8.4 8.6"><polygon points="0,8.6 8.4,8.6 4.2,0" fill="#dc1b1b"/></svg>
<div class="t d" style="left:1154.50px;width:34.50px;top:260.85px;font-size:9.5px;font-weight:normal;color:#2a2a2a;text-align:center;">112%</div>
<div class="t d" style="left:49.00px;width:50.50px;top:281.41px;font-size:9.5px;font-weight:normal;color:#2a2a2a;text-align:center;">5</div>
<div class="t d" style="left:99.50px;width:120.20px;top:281.41px;font-size:9.5px;font-weight:normal;color:#2a2a2a;text-align:center;">Offer Stage</div>
<div class="t d" style="left:219.70px;width:182.30px;top:281.41px;font-size:9.5px;font-weight:normal;color:#2a2a2a;text-align:center;">Hires Made</div>
<div class="t d" style="left:402.00px;width:92.00px;top:281.41px;font-size:9.5px;font-weight:normal;color:#2a2a2a;text-align:center;">Hires</div>
<div class="t d" style="left:494.00px;width:47.00px;top:281.41px;font-size:9.5px;font-weight:normal;color:#2a2a2a;text-align:center;">UTB</div>
<div class="t d" style="left:546.00px;width:70.80px;top:281.41px;font-size:9.5px;font-weight:normal;color:#2a2a2a;text-align:center;">85.0</div>
<div class="t d" style="left:616.80px;width:62.20px;top:281.41px;font-size:9.5px;font-weight:normal;color:#2a2a2a;text-align:center;">66.3</div>
<svg style="left:688.30px;top:286.20px" width="8.4" height="8.6" viewBox="0 0 8.4 8.6"><polygon points="0,8.6 8.4,8.6 4.2,0" fill="#4c9f3b"/></svg>
<div class="t d" style="left:706.00px;width:34.50px;top:281.41px;font-size:9.5px;font-weight:normal;color:#2a2a2a;text-align:center;">128%</div>
<div class="t d" style="left:740.50px;width:63.00px;top:281.41px;font-size:9.5px;font-weight:normal;color:#2a2a2a;text-align:center;">57.7</div>
<svg style="left:810.55px;top:286.20px" width="8.4" height="8.6" viewBox="0 0 8.4 8.6"><polygon points="0,8.6 8.4,8.6 4.2,0" fill="#dc1b1b"/></svg>
<div class="t d" style="left:826.00px;width:38.50px;top:281.41px;font-size:9.5px;font-weight:normal;color:#2a2a2a;text-align:center;">147%</div>
<div class="t d" style="left:869.00px;width:63.50px;top:281.41px;font-size:9.5px;font-weight:normal;color:#2a2a2a;text-align:center;">690.0</div>
<div class="t d" style="left:932.50px;width:63.00px;top:281.41px;font-size:9.5px;font-weight:normal;color:#2a2a2a;text-align:center;">552.0</div>
<svg style="left:1003.80px;top:286.20px" width="8.4" height="8.6" viewBox="0 0 8.4 8.6"><polygon points="0,8.6 8.4,8.6 4.2,0" fill="#4c9f3b"/></svg>
<div class="t d" style="left:1020.50px;width:44.50px;top:281.41px;font-size:9.5px;font-weight:normal;color:#2a2a2a;text-align:center;">125%</div>
<div class="t d" style="left:1065.00px;width:63.00px;top:281.41px;font-size:9.5px;font-weight:normal;color:#2a2a2a;text-align:center;">585.1</div>
<svg style="left:1137.05px;top:286.20px" width="8.4" height="8.6" viewBox="0 0 8.4 8.6"><polygon points="0,8.6 8.4,8.6 4.2,0" fill="#dc1b1b"/></svg>
<div class="t d" style="left:1154.50px;width:34.50px;top:281.41px;font-size:9.5px;font-weight:normal;color:#2a2a2a;text-align:center;">118%</div>
<div class="t d" style="left:49.00px;width:50.50px;top:301.97px;font-size:9.5px;font-weight:normal;color:#2a2a2a;text-align:center;">6</div>
<div class="t d" style="left:99.50px;width:120.20px;top:301.97px;font-size:9.5px;font-weight:normal;color:#2a2a2a;text-align:center;">Offer Stage</div>
<div class="t d" style="left:219.70px;width:182.30px;top:301.97px;font-size:9.5px;font-weight:normal;color:#2a2a2a;text-align:center;">Offer Acceptance Rate</div>
<div class="t d" style="left:402.00px;width:92.00px;top:301.97px;font-size:9.5px;font-weight:normal;color:#2a2a2a;text-align:center;">Percentage</div>
<div class="t d" style="left:494.00px;width:47.00px;top:301.97px;font-size:9.5px;font-weight:normal;color:#2a2a2a;text-align:center;">UTB</div>
<div class="t d" style="left:546.00px;width:70.80px;top:301.97px;font-size:9.5px;font-weight:normal;color:#2a2a2a;text-align:center;">88.0</div>
<div class="t d" style="left:616.80px;width:62.20px;top:301.97px;font-size:9.5px;font-weight:normal;color:#2a2a2a;text-align:center;">73.9</div>
<svg style="left:688.30px;top:306.76px" width="8.4" height="8.6" viewBox="0 0 8.4 8.6"><polygon points="0,8.6 8.4,8.6 4.2,0" fill="#4c9f3b"/></svg>
<div class="t d" style="left:706.00px;width:34.50px;top:301.97px;font-size:9.5px;font-weight:normal;color:#2a2a2a;text-align:center;">119%</div>
<div class="t d" style="left:740.50px;width:63.00px;top:301.97px;font-size:9.5px;font-weight:normal;color:#2a2a2a;text-align:center;">86.5</div>
<svg style="left:810.55px;top:306.76px" width="8.4" height="8.6" viewBox="0 0 8.4 8.6"><polygon points="0,8.6 8.4,8.6 4.2,0" fill="#dc1b1b"/></svg>
<div class="t d" style="left:826.00px;width:38.50px;top:301.97px;font-size:9.5px;font-weight:normal;color:#2a2a2a;text-align:center;">102%</div>
<div class="t d" style="left:869.00px;width:63.50px;top:301.97px;font-size:9.5px;font-weight:normal;color:#2a2a2a;text-align:center;">986.0</div>
<div class="t d" style="left:932.50px;width:63.00px;top:301.97px;font-size:9.5px;font-weight:normal;color:#2a2a2a;text-align:center;">1,005.7</div>
<svg style="left:1003.80px;top:306.76px" width="8.4" height="8.6" viewBox="0 0 8.4 8.6"><polygon points="0,8.6 8.4,8.6 4.2,0" fill="#dc1b1b"/></svg>
<div class="t d" style="left:1020.50px;width:44.50px;top:301.97px;font-size:9.5px;font-weight:normal;color:#2a2a2a;text-align:center;">98%</div>
<div class="t d" style="left:1065.00px;width:63.00px;top:301.97px;font-size:9.5px;font-weight:normal;color:#2a2a2a;text-align:center;">895.1</div>
<svg style="left:1137.05px;top:306.76px" width="8.4" height="8.6" viewBox="0 0 8.4 8.6"><polygon points="0,8.6 8.4,8.6 4.2,0" fill="#dc1b1b"/></svg>
<div class="t d" style="left:1154.50px;width:34.50px;top:301.97px;font-size:9.5px;font-weight:normal;color:#2a2a2a;text-align:center;">110%</div>
<div class="t d" style="left:49.00px;width:50.50px;top:322.53px;font-size:9.5px;font-weight:normal;color:#2a2a2a;text-align:center;">7</div>
<div class="t d" style="left:99.50px;width:120.20px;top:322.53px;font-size:9.5px;font-weight:normal;color:#2a2a2a;text-align:center;">Time</div>
<div class="t d" style="left:219.70px;width:182.30px;top:322.53px;font-size:9.5px;font-weight:normal;color:#2a2a2a;text-align:center;">Time to Hire</div>
<div class="t d" style="left:402.00px;width:92.00px;top:322.53px;font-size:9.5px;font-weight:normal;color:#2a2a2a;text-align:center;">Days</div>
<div class="t d" style="left:494.00px;width:47.00px;top:322.53px;font-size:9.5px;font-weight:normal;color:#2a2a2a;text-align:center;">LTB</div>
<div class="t d" style="left:546.00px;width:70.80px;top:322.53px;font-size:9.5px;font-weight:normal;color:#2a2a2a;text-align:center;">4.0</div>
<div class="t d" style="left:616.80px;width:62.20px;top:322.53px;font-size:9.5px;font-weight:normal;color:#2a2a2a;text-align:center;">4.8</div>
<svg style="left:688.30px;top:327.32px" width="8.4" height="8.6" viewBox="0 0 8.4 8.6"><polygon points="0,0 8.4,0 4.2,8.6" fill="#6b9a58"/></svg>
<div class="t d" style="left:706.00px;width:34.50px;top:322.53px;font-size:9.5px;font-weight:normal;color:#2a2a2a;text-align:center;">83%</div>
<div class="t d" style="left:740.50px;width:63.00px;top:322.53px;font-size:9.5px;font-weight:normal;color:#2a2a2a;text-align:center;">5.2</div>
<svg style="left:810.55px;top:327.32px" width="8.4" height="8.6" viewBox="0 0 8.4 8.6"><polygon points="0,0 8.4,0 4.2,8.6" fill="#6b9a58"/></svg>
<div class="t d" style="left:826.00px;width:38.50px;top:322.53px;font-size:9.5px;font-weight:normal;color:#2a2a2a;text-align:center;">77%</div>
<div class="t d" style="left:869.00px;width:63.50px;top:322.53px;font-size:9.5px;font-weight:normal;color:#2a2a2a;text-align:center;">111.0</div>
<div class="t d" style="left:932.50px;width:63.00px;top:322.53px;font-size:9.5px;font-weight:normal;color:#2a2a2a;text-align:center;">106.6</div>
<svg style="left:1003.80px;top:327.32px" width="8.4" height="8.6" viewBox="0 0 8.4 8.6"><polygon points="0,0 8.4,0 4.2,8.6" fill="#dc1b1b"/></svg>
<div class="t d" style="left:1020.50px;width:44.50px;top:322.53px;font-size:9.5px;font-weight:normal;color:#2a2a2a;text-align:center;">104%</div>
<div class="t d" style="left:1065.00px;width:63.00px;top:322.53px;font-size:9.5px;font-weight:normal;color:#2a2a2a;text-align:center;">85.2</div>
<svg style="left:1137.05px;top:327.32px" width="8.4" height="8.6" viewBox="0 0 8.4 8.6"><polygon points="0,0 8.4,0 4.2,8.6" fill="#6b9a58"/></svg>
<div class="t d" style="left:1154.50px;width:34.50px;top:322.53px;font-size:9.5px;font-weight:normal;color:#2a2a2a;text-align:center;">130%</div>
<div class="t d" style="left:49.00px;width:50.50px;top:343.09px;font-size:9.5px;font-weight:normal;color:#2a2a2a;text-align:center;">8</div>
<div class="t d" style="left:99.50px;width:120.20px;top:343.09px;font-size:9.5px;font-weight:normal;color:#2a2a2a;text-align:center;">Cost</div>
<div class="t d" style="left:219.70px;width:182.30px;top:343.09px;font-size:9.5px;font-weight:normal;color:#2a2a2a;text-align:center;">Cost per Hire</div>
<div class="t d" style="left:402.00px;width:92.00px;top:343.09px;font-size:9.5px;font-weight:normal;color:#2a2a2a;text-align:center;">Currency</div>
<div class="t d" style="left:494.00px;width:47.00px;top:343.09px;font-size:9.5px;font-weight:normal;color:#2a2a2a;text-align:center;">LTB</div>
<div class="t d" style="left:546.00px;width:70.80px;top:343.09px;font-size:9.5px;font-weight:normal;color:#2a2a2a;text-align:center;">6,200.0</div>
<div class="t d" style="left:616.80px;width:62.20px;top:343.09px;font-size:9.5px;font-weight:normal;color:#2a2a2a;text-align:center;">7,378.0</div>
<svg style="left:688.30px;top:347.88px" width="8.4" height="8.6" viewBox="0 0 8.4 8.6"><polygon points="0,0 8.4,0 4.2,8.6" fill="#6b9a58"/></svg>
<div class="t d" style="left:706.00px;width:34.50px;top:343.09px;font-size:9.5px;font-weight:normal;color:#2a2a2a;text-align:center;">84%</div>
<div class="t d" style="left:740.50px;width:63.00px;top:343.09px;font-size:9.5px;font-weight:normal;color:#2a2a2a;text-align:center;">8,927.4</div>
<svg style="left:810.55px;top:347.88px" width="8.4" height="8.6" viewBox="0 0 8.4 8.6"><polygon points="0,0 8.4,0 4.2,8.6" fill="#6b9a58"/></svg>
<div class="t d" style="left:826.00px;width:38.50px;top:343.09px;font-size:9.5px;font-weight:normal;color:#2a2a2a;text-align:center;">69%</div>
<div class="t d" style="left:869.00px;width:63.50px;top:343.09px;font-size:9.5px;font-weight:normal;color:#2a2a2a;text-align:center;">67,700.0</div>
<div class="t d" style="left:932.50px;width:63.00px;top:343.09px;font-size:9.5px;font-weight:normal;color:#2a2a2a;text-align:center;">61,607.0</div>
<svg style="left:1003.80px;top:347.88px" width="8.4" height="8.6" viewBox="0 0 8.4 8.6"><polygon points="0,0 8.4,0 4.2,8.6" fill="#dc1b1b"/></svg>
<div class="t d" style="left:1020.50px;width:44.50px;top:343.09px;font-size:9.5px;font-weight:normal;color:#2a2a2a;text-align:center;">110%</div>
<div class="t d" style="left:1065.00px;width:63.00px;top:343.09px;font-size:9.5px;font-weight:normal;color:#2a2a2a;text-align:center;">64,687.4</div>
<svg style="left:1137.05px;top:347.88px" width="8.4" height="8.6" viewBox="0 0 8.4 8.6"><polygon points="0,0 8.4,0 4.2,8.6" fill="#6b9a58"/></svg>
<div class="t d" style="left:1154.50px;width:34.50px;top:343.09px;font-size:9.5px;font-weight:normal;color:#2a2a2a;text-align:center;">105%</div>
<div class="t d" style="left:49.00px;width:50.50px;top:363.65px;font-size:9.5px;font-weight:normal;color:#2a2a2a;text-align:center;">9</div>
<div class="t d" style="left:99.50px;width:120.20px;top:363.65px;font-size:9.5px;font-weight:normal;color:#2a2a2a;text-align:center;">Source</div>
<div class="t d" style="left:219.70px;width:182.30px;top:363.65px;font-size:9.5px;font-weight:normal;color:#2a2a2a;text-align:center;">Candidate Source Efficiency</div>
<div class="t d" style="left:402.00px;width:92.00px;top:363.65px;font-size:9.5px;font-weight:normal;color:#2a2a2a;text-align:center;">Percentage</div>
<div class="t d" style="left:494.00px;width:47.00px;top:363.65px;font-size:9.5px;font-weight:normal;color:#2a2a2a;text-align:center;">UTB</div>
<div class="t d" style="left:546.00px;width:70.80px;top:363.65px;font-size:9.5px;font-weight:normal;color:#2a2a2a;text-align:center;">45.0</div>
<div class="t d" style="left:616.80px;width:62.20px;top:363.65px;font-size:9.5px;font-weight:normal;color:#2a2a2a;text-align:center;">42.3</div>
<svg style="left:688.30px;top:368.44px" width="8.4" height="8.6" viewBox="0 0 8.4 8.6"><polygon points="0,8.6 8.4,8.6 4.2,0" fill="#4c9f3b"/></svg>
<div class="t d" style="left:706.00px;width:34.50px;top:363.65px;font-size:9.5px;font-weight:normal;color:#2a2a2a;text-align:center;">106%</div>
<div class="t d" style="left:740.50px;width:63.00px;top:363.65px;font-size:9.5px;font-weight:normal;color:#2a2a2a;text-align:center;">41.9</div>
<svg style="left:810.55px;top:368.44px" width="8.4" height="8.6" viewBox="0 0 8.4 8.6"><polygon points="0,8.6 8.4,8.6 4.2,0" fill="#dc1b1b"/></svg>
<div class="t d" style="left:826.00px;width:38.50px;top:363.65px;font-size:9.5px;font-weight:normal;color:#2a2a2a;text-align:center;">107%</div>
<div class="t d" style="left:869.00px;width:63.50px;top:363.65px;font-size:9.5px;font-weight:normal;color:#2a2a2a;text-align:center;">392.0</div>
<div class="t d" style="left:932.50px;width:63.00px;top:363.65px;font-size:9.5px;font-weight:normal;color:#2a2a2a;text-align:center;">407.7</div>
<svg style="left:1003.80px;top:368.44px" width="8.4" height="8.6" viewBox="0 0 8.4 8.6"><polygon points="0,8.6 8.4,8.6 4.2,0" fill="#dc1b1b"/></svg>
<div class="t d" style="left:1020.50px;width:44.50px;top:363.65px;font-size:9.5px;font-weight:normal;color:#2a2a2a;text-align:center;">96%</div>
<div class="t d" style="left:1065.00px;width:63.00px;top:363.65px;font-size:9.5px;font-weight:normal;color:#2a2a2a;text-align:center;">354.7</div>
<svg style="left:1137.05px;top:368.44px" width="8.4" height="8.6" viewBox="0 0 8.4 8.6"><polygon points="0,8.6 8.4,8.6 4.2,0" fill="#dc1b1b"/></svg>
<div class="t d" style="left:1154.50px;width:34.50px;top:363.65px;font-size:9.5px;font-weight:normal;color:#2a2a2a;text-align:center;">111%</div>
<div class="t d" style="left:49.00px;width:50.50px;top:384.21px;font-size:9.5px;font-weight:normal;color:#2a2a2a;text-align:center;">10</div>
<div class="t d" style="left:99.50px;width:120.20px;top:384.21px;font-size:9.5px;font-weight:normal;color:#2a2a2a;text-align:center;">Productivity</div>
<div class="t d" style="left:219.70px;width:182.30px;top:384.21px;font-size:9.5px;font-weight:normal;color:#2a2a2a;text-align:center;">Recruiter Productivity</div>
<div class="t d" style="left:402.00px;width:92.00px;top:384.21px;font-size:9.5px;font-weight:normal;color:#2a2a2a;text-align:center;">Hires per Recruiter</div>
<div class="t d" style="left:494.00px;width:47.00px;top:384.21px;font-size:9.5px;font-weight:normal;color:#2a2a2a;text-align:center;">UTB</div>
<div class="t d" style="left:546.00px;width:70.80px;top:384.21px;font-size:9.5px;font-weight:normal;color:#2a2a2a;text-align:center;">16.0</div>
<div class="t d" style="left:616.80px;width:62.20px;top:384.21px;font-size:9.5px;font-weight:normal;color:#2a2a2a;text-align:center;">18.7</div>
<svg style="left:688.30px;top:389.00px" width="8.4" height="8.6" viewBox="0 0 8.4 8.6"><polygon points="0,0 8.4,0 4.2,8.6" fill="#dc1b1b"/></svg>
<div class="t d" style="left:706.00px;width:34.50px;top:384.21px;font-size:9.5px;font-weight:normal;color:#2a2a2a;text-align:center;">86%</div>
<div class="t d" style="left:740.50px;width:63.00px;top:384.21px;font-size:9.5px;font-weight:normal;color:#2a2a2a;text-align:center;">16.1</div>
<svg style="left:810.55px;top:389.00px" width="8.4" height="8.6" viewBox="0 0 8.4 8.6"><polygon points="0,0 8.4,0 4.2,8.6" fill="#dc1b1b"/></svg>
<div class="t d" style="left:826.00px;width:38.50px;top:384.21px;font-size:9.5px;font-weight:normal;color:#2a2a2a;text-align:center;">99%</div>
<div class="t d" style="left:869.00px;width:63.50px;top:384.21px;font-size:9.5px;font-weight:normal;color:#2a2a2a;text-align:center;">122.0</div>
<div class="t d" style="left:932.50px;width:63.00px;top:384.21px;font-size:9.5px;font-weight:normal;color:#2a2a2a;text-align:center;">126.9</div>
<svg style="left:1003.80px;top:389.00px" width="8.4" height="8.6" viewBox="0 0 8.4 8.6"><polygon points="0,0 8.4,0 4.2,8.6" fill="#dc1b1b"/></svg>
<div class="t d" style="left:1020.50px;width:44.50px;top:384.21px;font-size:9.5px;font-weight:normal;color:#2a2a2a;text-align:center;">96%</div>
<div class="t d" style="left:1065.00px;width:63.00px;top:384.21px;font-size:9.5px;font-weight:normal;color:#2a2a2a;text-align:center;">101.5</div>
<svg style="left:1137.05px;top:389.00px" width="8.4" height="8.6" viewBox="0 0 8.4 8.6"><polygon points="0,0 8.4,0 4.2,8.6" fill="#dc1b1b"/></svg>
<div class="t d" style="left:1154.50px;width:34.50px;top:384.21px;font-size:9.5px;font-weight:normal;color:#2a2a2a;text-align:center;">120%</div>
<!-- search pill -->
<div style="left:22px;top:2px;width:89.5px;height:26px;border-radius:13px;background:#fdfdfe;box-shadow:0 0 5px 2px rgba(228,232,240,0.9);"></div>
<svg style="left:0;top:0" width="1210" height="64" viewBox="0 0 1210 64">
 <g fill="none" stroke="#444746" stroke-width="1.6" stroke-linecap="butt" stroke-linejoin="miter">
  <!-- search -->
  <circle cx="36.6" cy="14.2" r="3.9"/>
  <line x1="39.4" y1="17" x2="44" y2="21.2" stroke-width="1.8"/>
  <!-- undo -->
  <path d="M121.8 13.8 H127.6 A3.45 3.45 0 0 1 127.6 20.7 H123.4" stroke-width="1.5"/>
  <path d="M124.4 11.2 L121.6 13.8 L124.4 16.4" stroke-width="1.5"/>
  <!-- redo -->
  <path d="M157.6 13.8 H151.8 A3.45 3.45 0 0 0 151.8 20.7 H156" stroke-width="1.5"/>
  <path d="M155 11.2 L157.8 13.8 L155 16.4" stroke-width="1.5"/>
  <!-- print -->
  <path d="M178.6 12.4 V9.6 H185.9 V12.4"/>
  <path d="M178.4 18.6 H176.1 V14.4 Q176.1 12.6 177.9 12.6 H186.6 Q188.4 12.6 188.4 14.4 V18.6 H186.1"/>
  <rect x="178.6" y="16.4" width="7.3" height="4.5"/>
  <!-- paint format -->
  <rect x="207" y="9" width="8.2" height="3.6" rx="0.8"/>
  <path d="M207 10.8 H204 V15.4 H210.4 V18.4" stroke-width="1.4"/>
  <rect x="208.9" y="18.4" width="3" height="4.4" rx="0.8"/>
  <!-- separators -->
 </g>
 <g fill="#c7c7c7">
  <rect x="296.2" y="6.6" width="1" height="17.4"/>
  <rect x="444" y="6.6" width="1" height="17.4"/>
  <rect x="538" y="6.6" width="1" height="17.4"/>
  <rect x="624.5" y="6.6" width="1" height="17.4"/>
  <rect x="745.2" y="6.6" width="1" height="17.4"/>
  <rect x="850" y="6.6" width="1" height="17.4"/>
  <rect x="1000.5" y="6.6" width="1" height="17.4"/>
  <rect x="94" y="45.2" width="1" height="14.5"/>
 </g>
 <g fill="#444746">
  <!-- dropdown arrows -->
  <polygon points="277.2,14 283.6,14 280.4,17"/>
  <polygon points="518.6,13.4 524.6,13.4 521.6,16.4"/>
  <polygon points="878,13.6 884.4,13.6 881.2,16.6"/>
  <polygon points="914.2,13.6 920.6,13.6 917.4,16.6"/>
  <polygon points="950.6,13.6 957,13.6 953.8,16.6"/>
  <polygon points="986.4,13.6 992.8,13.6 989.6,16.6"/>
  <polygon points="1142.2,13.6 1148.4,13.6 1145.3,16.6"/>
  <polygon points="75.8,50 83.4,50 79.6,53.6"/>
 </g>
 <polygon points="837,13.6 843.4,13.6 840.2,16.6" fill="#b8b8b8"/>
 <g fill="none" stroke="#444746" stroke-width="1.5">
  <!-- minus / plus -->
  <line x1="547.5" y1="14.6" x2="557.5" y2="14.6"/>
  <line x1="604.5" y1="14.6" x2="614.5" y2="14.6"/>
  <line x1="609.5" y1="9.4" x2="609.5" y2="19.8"/>
  <!-- font size box -->
  <rect x="567" y="5" width="29" height="20.4" rx="3" stroke="#747775" stroke-width="1"/>
  <!-- strikethrough -->
  <line x1="690.5" y1="14.4" x2="704.2" y2="14.4" stroke-width="1.3"/>
  <path d="M695.3 12.6 Q695.3 9.5 697.9 9.5 Q700.4 9.5 700.7 11.6" stroke-width="1.5"/>
  <path d="M695.3 16.4 Q695.5 20 698 20 Q700.7 20 700.7 17.4" stroke-width="1.5"/>
  <!-- borders icon -->
  <rect x="787" y="9.8" width="11" height="11" stroke-width="1.6"/>
  <line x1="792.5" y1="9.8" x2="792.5" y2="20.8" stroke-width="1.4"/>
  <line x1="787" y1="15.3" x2="798" y2="15.3" stroke-width="1.4"/>
  <!-- align left -->
  <g stroke-width="1.3"><line x1="859.2" y1="9.7" x2="872" y2="9.7"/>
  <line x1="859.2" y1="12.5" x2="869" y2="12.5"/>
  <line x1="859.2" y1="15.3" x2="872" y2="15.3"/>
  <line x1="859.2" y1="18.1" x2="869" y2="18.1"/>
  <line x1="859.2" y1="20.9" x2="872" y2="20.9"/></g>
  <!-- vertical align bottom -->
  <line x1="895.5" y1="20.8" x2="906.6" y2="20.8"/>
  <line x1="901" y1="9" x2="901" y2="17.6"/>
  <path d="M897.6 14.6 L901 18 L904.4 14.6"/>
  <!-- wrap -->
  <line x1="932.2" y1="9.2" x2="932.2" y2="21.2"/>
  <line x1="935.6" y1="9.2" x2="935.6" y2="11.2" stroke-width="1.3"/>
  <line x1="935.6" y1="13.4" x2="935.6" y2="17.2" stroke-width="1.3"/>
  <line x1="935.6" y1="19.2" x2="935.6" y2="21.2" stroke-width="1.3"/>
  <line x1="935.6" y1="15.2" x2="941.4" y2="15.2"/>
  <path d="M938.8 12.6 L941.4 15.2 L938.8 17.8"/>
  <!-- text rotation -->
  <path d="M969.8 18.2 L973.6 9 L977.4 18.2 M971.2 15 H976"/>
  <path d="M968.4 21 H978.6 M976.4 19 L978.8 21 L976.4 23" stroke-width="1.3"/>
  <!-- link -->
  <path d="M1016.2 11.9 H1014 A3.6 3.6 0 0 0 1014 19.1 H1016.2 M1019.2 11.9 H1021.4 A3.6 3.6 0 0 1 1021.4 19.1 H1019.2 M1014.6 15.5 H1020.8" stroke-width="1.6"/>
  <!-- comment -->
  <path d="M1039 20.8 V9.6 H1052 V18.2 H1041.6 Z" stroke-width="1.5"/>
  <line x1="1045.5" y1="11.2" x2="1045.5" y2="16.6"/>
  <line x1="1042.8" y1="13.9" x2="1048.2" y2="13.9"/>
  <!-- chart -->
  <rect x="1068.7" y="9.8" width="10.4" height="10.4" rx="1.4" stroke-width="1.6"/>
  <line x1="1071.8" y1="13.2" x2="1071.8" y2="17.8" stroke-width="1.4"/>
  <line x1="1074.6" y1="12.2" x2="1074.6" y2="17.8" stroke-width="1.4"/>
  <line x1="1077" y1="16.2" x2="1077" y2="17.8" stroke-width="1.4"/>
  <!-- filter -->
  <path d="M1097.8 10.8 H1106.6 L1102.2 15.8 Z M1102.2 15.8 V20.4" stroke-width="1.6" stroke-linejoin="round"/>
  <!-- functions table -->
  <path d="M1121.2 20.8 V9 H1132" stroke-width="1.4"/>
  <rect x="1123.6" y="11.6" width="11.2" height="10" stroke-width="1.5"/>
  <line x1="1123.6" y1="14.6" x2="1134.8" y2="14.6" stroke-width="1.6"/>
  <line x1="1123.6" y1="18.2" x2="1134.8" y2="18.2" stroke-width="1"/>
  <line x1="1127.4" y1="14.6" x2="1127.4" y2="21.6" stroke-width="1"/>
  <line x1="1131.1" y1="14.6" x2="1131.1" y2="21.6" stroke-width="1"/>
  <!-- sigma -->
  <path d="M1170.6 11.3 H1163.8 L1167.6 15.4 L1163.8 19.5 H1170.6" stroke-width="1.8"/>
 </g>
 <!-- merge (disabled) -->
 <g fill="none" stroke="#b4b4b4" stroke-width="1.3">
  <path d="M815.6 12 V9.6 H819.4 M824.6 9.6 H828.4 V12 M815.6 18.6 V21 H819.4 M824.6 21 H828.4 V18.6"/>
  <path d="M815.6 15.3 H820.2 M818.4 13.5 L820.2 15.3 L818.4 17.1 M828.4 15.3 H823.8 M825.6 13.5 L823.8 15.3 L825.6 17.1"/>
 </g>
 <!-- paint bucket -->
 <g fill="#444746">
  <path d="M760.4 8.8 L756.6 12.6 L760.4 16.4 L764.2 12.6 Z" fill="none" stroke="#444746" stroke-width="1.5"/>
  <path d="M756.6 12.6 L764.2 12.6 L760.4 16.4 Z"/>
  <line x1="758" y1="6" x2="760.8" y2="9.2" stroke="#444746" stroke-width="1.4"/>
  <circle cx="767" cy="15.8" r="1.2"/>
  <!-- text color A -->
  <rect x="716.8" y="20.6" width="19.8" height="2.6" fill="#000"/>
 </g>
</svg>
<div class="t" style="left:55px;top:4.6px;font-size:12.3px;color:#4f5153;">Menus</div>
<div class="t" style="left:233px;top:5.6px;font-size:12.3px;color:#444746;">100%</div>
<div class="t" style="left:309px;top:3.9px;font-size:12px;font-weight:bold;color:#444746;">$</div>
<div class="t" style="left:336px;top:4.2px;font-size:11.5px;color:#444746;-webkit-text-stroke:0.5px #444746;">%</div>
<div class="t" style="left:362.5px;top:2.5px;font-size:11.5px;color:#444746;letter-spacing:-0.3px;-webkit-text-stroke:0.5px #444746;">.0</div>
<div class="t" style="left:390.4px;top:2.5px;font-size:11.5px;color:#444746;letter-spacing:-0.5px;-webkit-text-stroke:0.5px #444746;">.00</div>
<div class="t" style="left:419.6px;top:4.3px;font-size:10.8px;color:#444746;letter-spacing:-0.6px;-webkit-text-stroke:0.25px #444746;">123</div>
<div class="t" style="left:459px;top:3.7px;font-size:12.3px;color:#444746;">Defaul...</div>
<div class="t" style="left:574.4px;top:4.3px;font-size:11.3px;color:#444746;">10</div>
<div class="t" style="left:637px;top:4.7px;font-size:12.5px;font-weight:bold;color:#444746;">B</div>
<svg style="left:660px;top:5px" width="20" height="20" viewBox="660 5 20 20"><g stroke="#444746" fill="none" stroke-width="1.7"><path d="M666.6 10.4 H674.2 M664.6 19.4 H672.2 M671.2 10.4 L667.6 19.4"/></g></svg>
<div class="t" style="left:722.2px;top:2.6px;font-size:12.4px;color:#444746;">A</div>
<div class="t" style="left:12.6px;top:41.8px;font-size:10.6px;color:#333;letter-spacing:-0.3px;-webkit-text-stroke:0.2px #333;">Z13</div>
<div class="t" style="left:103.8px;top:41.8px;font-size:15px;font-style:italic;color:#6f7378;font-family:'Liberation Serif',serif;">fx</div>
<svg style="left:0;top:0" width="420" height="30" viewBox="0 0 420 30">
 <g fill="none" stroke="#444746" stroke-width="1.2">
  <path d="M376.6 19.8 H371 M373 17.8 L371 19.8 L373 21.8"/>
  <path d="M398.4 19.8 H404.2 M402.2 17.8 L404.2 19.8 L402.2 21.8"/>
 </g>
</svg>

</body></html>
